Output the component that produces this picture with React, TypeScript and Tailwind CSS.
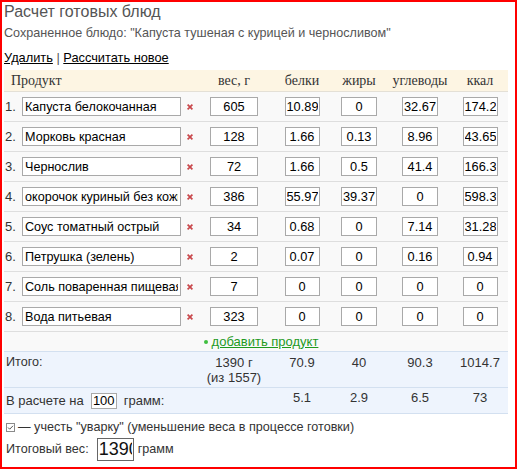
import React from "react";

const COLS =
  "grid grid-cols-[180px_16px_68px_68px_46px_76px_44px]";

type Row = {
  name: string;
  w: string;
  b: string;
  f: string;
  c: string;
  k: string;
};

const rows: Row[] = [
  { name: "Капуста белокочанная", w: "605", b: "10.89", f: "0", c: "32.67", k: "174.24" },
  { name: "Морковь красная", w: "128", b: "1.66", f: "0.13", c: "8.96", k: "43.65" },
  { name: "Чернослив", w: "72", b: "1.66", f: "0.5", c: "41.4", k: "166.32" },
  { name: "окорочок куриный без кожи", w: "386", b: "55.97", f: "39.37", c: "0", k: "598.3" },
  { name: "Соус томатный острый", w: "34", b: "0.68", f: "0", c: "7.14", k: "31.28" },
  { name: "Петрушка (зелень)", w: "2", b: "0.07", f: "0", c: "0.16", k: "0.94" },
  { name: "Соль поваренная пищевая", w: "7", b: "0", f: "0", c: "0", k: "0" },
  { name: "Вода питьевая", w: "323", b: "0", f: "0", c: "0", k: "0" },
];

function Cross() {
  return (
    <svg width="6" height="6" viewBox="0 0 6 6">
      <path d="M0.6 0.6 L5.4 5.4 M5.4 0.6 L0.6 5.4" stroke="#c9474b" strokeWidth="1.7" />
    </svg>
  );
}

function NumInput({ v, w }: { v: string; w: string }) {
  return (
    <input
      readOnly
      value={v}
      className={`${w} h-[19px] border border-[#a9a9a9] bg-white px-[1px] text-center text-[12.8px] text-black outline-none`}
    />
  );
}

export default function App() {
  return (
    <div className="w-[517px] h-[469px] border-2 border-[#ff0000] bg-white pl-[2px] font-['Liberation_Sans',Arial,sans-serif] text-[12.6px] text-[#333]">
      <div className="h-[22px] text-[16px] leading-[20px] text-[#555]">Расчет готовых блюд</div>
      <div className="h-[18px] leading-[18px] text-[#555]">
        Сохраненное блюдо: "Капуста тушеная с курицей и черносливом"
      </div>
      <div className="mt-[5px] h-[19px] leading-[21px] text-[12.8px] text-black">
        <span className="underline">Удалить</span>
        <span className="text-[#555]"> | </span>
        <span className="underline">Рассчитать новое</span>
      </div>
      <div className="mt-[4px] w-[504px]">
        <div
          className={`${COLS} h-[22px] items-center border-b border-[#e4e0d6] bg-[#fdf5e3] font-['Liberation_Serif',serif] text-[14px] text-[#333]`}
        >
          <div className="pl-[7px]">Продукт</div>
          <div />
          <div className="text-center">вес, г</div>
          <div className="text-center">белки</div>
          <div className="text-center">жиры</div>
          <div className="text-center">углеводы</div>
          <div className="text-center">ккал</div>
        </div>
        {rows.map((r, i) => (
          <div
            key={i}
            className={`${COLS} h-[30px] items-center border-b border-[#dedede] bg-[#f9f9f9]`}
          >
            <div className="flex items-center">
              <span className="w-[18px] pl-[1px] text-[13px]">{i + 1}.</span>
              <input
                readOnly
                value={r.name}
                className="h-[19px] w-[159px] border border-[#a9a9a9] bg-white px-[2px] text-[12.6px] text-black outline-none"
              />
            </div>
            <div className="flex items-center pl-[3px]">
              <Cross />
            </div>
            <div className="flex justify-center">
              <NumInput v={r.w} w="w-[48px]" />
            </div>
            <div className="flex justify-center">
              <NumInput v={r.b} w="w-[35px]" />
            </div>
            <div className="flex justify-center">
              <NumInput v={r.f} w="w-[36px]" />
            </div>
            <div className="flex justify-center">
              <NumInput v={r.c} w="w-[36px]" />
            </div>
            <div className="flex justify-center">
              <NumInput v={r.k} w="w-[35px]" />
            </div>
          </div>
        ))}
        <div className="flex h-[19px] items-center justify-center bg-[#f9f9f9] pl-[10px]">
          <span className="mr-[2px] inline-block h-[4px] w-[4px] rounded-full bg-[#3fbf3f]" />
          <span className="ml-[2px] text-[13px] text-[#1e9a1e] underline">добавить продукт</span>
        </div>
        <div className={`${COLS} h-[37px] border-y border-[#d3e0f0] bg-[#eef4fd] pt-[3px] leading-[15px] text-[13px]`}>
          <div className="col-span-2 pl-[2px] text-[12.6px]">Итого:</div>
          <div className="text-center">
            <div>1390 г</div>
            <div>(из 1557)</div>
          </div>
          <div className="text-center">70.9</div>
          <div className="text-center">40</div>
          <div className="text-center">90.3</div>
          <div className="text-center">1014.7</div>
        </div>
        <div className={`${COLS} h-[26px] border-b border-[#d3e0f0] bg-[#eef4fd] leading-[15px] text-[13px]`}>
          <div className="col-span-3 flex items-center pl-[2px]">
            <span>В расчете на</span>
            <input
              readOnly
              value="100"
              className="ml-[7px] h-[16px] w-[26px] border border-[#a9a9a9] bg-white px-[1px] text-center text-[13px] text-black outline-none"
            />
            <span className="ml-[7px]">грамм:</span>
          </div>
          <div className="pt-[2px] text-center">5.1</div>
          <div className="pt-[2px] text-center">2.9</div>
          <div className="pt-[2px] text-center">6.5</div>
          <div className="pt-[2px] text-center">73</div>
        </div>
      </div>
      <div className="mt-[5px] flex h-[16px] items-center pl-[2px]">
        <svg width="9" height="9" viewBox="0 0 9 9" className="mr-[3px]">
          <rect x="0.5" y="0.5" width="8" height="8" fill="white" stroke="#8a8a8a" />
          <path d="M2 4.5 L3.7 6.2 L7 2.8" stroke="#555" strokeWidth="1" fill="none" />
        </svg>
        <span>— учесть "уварку" (уменьшение веса в процессе готовки)</span>
      </div>
      <div className="mt-[3px] flex items-center pl-[2px]">
        <span>Итоговый вес:</span>
        <input
          readOnly
          value="1390"
          className="ml-[8px] h-[23px] w-[37px] border border-[#666] bg-white px-[1px] text-[18px] text-[#111] outline-none"
        />
        <span className="ml-[4px]">грамм</span>
      </div>
    </div>
  );
}
